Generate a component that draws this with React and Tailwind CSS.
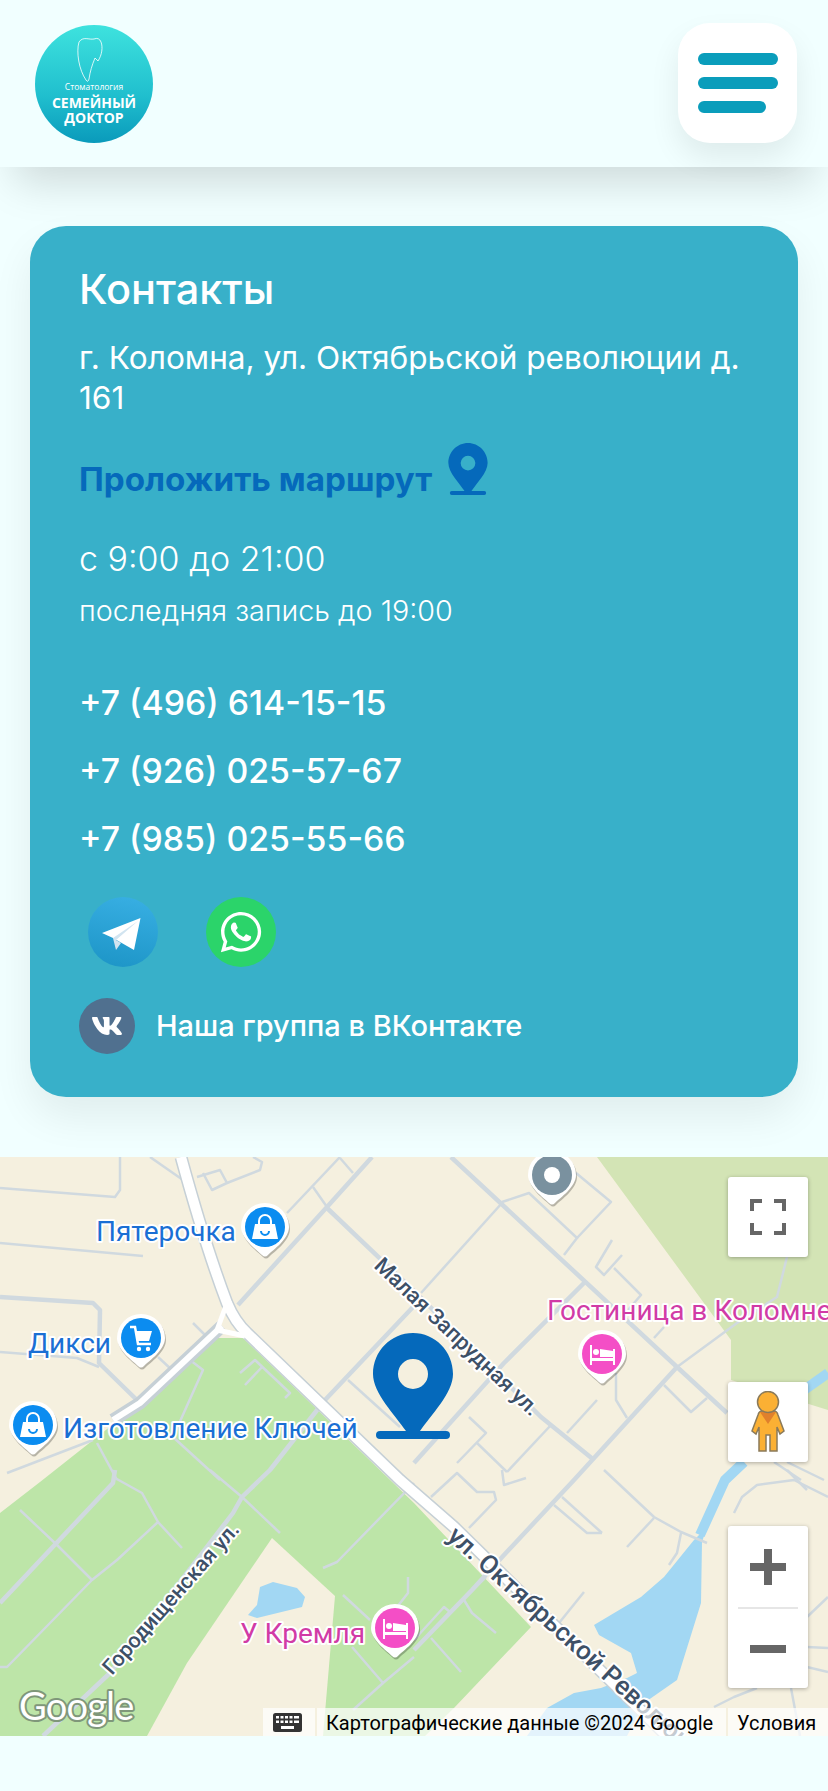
import React from 'react';
import { FaWhatsapp, FaVk } from 'react-icons/fa';

// thin streets, in page coordinates (the map svg starts at y = 1157)
const thinRoads = [
  'M0 1188L115 1197L120 1190V1157', 'M0 1243L143 1256', 'M0 1352L77 1358L99 1367',
  'M150 1157L183 1180', 'M197 1177L220 1170L227 1183L212 1190L203 1173', 'M227 1183L260 1170L262 1162L253 1157',
  'M287 1213L340 1157', 'M313 1187L327 1207', 'M340 1158L353 1173', 'M348 1380L400 1427',
  'M193 1323L205 1335', 'M158 1357L172 1370', 'M190 1360L203 1370L173 1437L220 1480', 'M210 1470L242 1497L280 1533',
  'M240 1373L255 1360L290 1393L285 1398', 'M262 1367L245 1385', 'M97 1443L117 1480', 'M7 1473L93 1440',
  'M20 1510L57 1545L92 1580', 'M0 1667H7L92 1580L117 1560L158 1522L142 1493L115 1478', 'M158 1522L182 1548',
  'M323 1568L337 1562L414 1483', 'M343 1595L370 1620', 'M352 1647L383 1683L414 1657', 'M383 1683L353 1710',
  'M408 1577V1593L397 1607', 'M414 1640L444 1607L450 1612L486 1577', 'M431 1638L461 1672', 'M464 1600L472 1613L496 1633',
  'M677 1367L737 1323L777 1297L787 1257', 'M502 1203L421 1293', 'M502 1202L529 1193L577 1238L564 1255',
  'M576 1173L611 1202L577 1238', 'M612 1240L596 1267L604 1275L622 1255', 'M614 1268L641 1295L628 1310',
  'M654 1338L664 1327', 'M664 1385L691 1412L707 1398', 'M616 1373V1400L627 1418', 'M597 1400L567 1433',
  'M469 1417L486 1433L457 1463', 'M431 1497L457 1473L477 1492H494L496 1500L469 1528', 'M477 1443L507 1472', 'M551 1425L507 1472',
  'M502 1470L504 1485L526 1478', 'M554 1505L587 1533H602', 'M562 1497L602 1533', 'M604 1470L654 1517L681 1532L707 1543',
  'M654 1518L627 1547', 'M584 1592L559 1623', 'M681 1533L677 1553L669 1565', 'M734 1513L742 1497L757 1485L794 1480L828 1497',
  'M787 1470L807 1490', 'M807 1617L828 1597', 'M807 1647L828 1648', 'M807 1667L828 1672', 'M714 1707L734 1697L757 1688',
  'M791 1688L800 1736', 'M774 1462L801 1480', 'M787 1462L824 1480',
];

// wider streets
const wideRoads = [
  'M0 1297L93 1303L100 1310L99 1363L140 1403', 'M238 1305L327 1207L372 1157', 'M327 1208L413 1290L541 1417L594 1460',
  'M413 1307L325 1400L270 1470L242 1497L233 1513L110 1673L43 1736', 'M0 1603L113 1483L115 1470',
  'M451 1157L677 1367L727 1413', 'M677 1367L574 1480L504 1555L472 1590L414 1650', 'M584 1283L504 1363L414 1463',
];

function BagIcon() {
  return (
    <g fill="#fff">
      <path d="M-10 -3H10L13 12H-13Z" />
      <path d="M-6 -3V-6A6 6 0 0 1 6 -6V-3" fill="none" stroke="#fff" strokeWidth="2" />
      <path d="M-4 4A4 4 0 0 0 4 4" fill="none" stroke="#0b8cf0" strokeWidth="2" />
    </g>
  );
}

function CartIcon() {
  return (
    <g fill="#fff">
      <path d="M-11 -11H-6L-3 6H10" fill="none" stroke="#fff" strokeWidth="2.5" />
      <path d="M-5 -7H11L8 3H-3Z" />
      <circle cx="-2" cy="11" r="2.2" />
      <circle cx="7" cy="11" r="2.2" />
    </g>
  );
}

function BedIcon() {
  return (
    <g fill="#fff">
      <rect x="-12" y="-9" width="2" height="20" />
      <rect x="11" y="-5" width="2" height="16" />
      <rect x="-12" y="4" width="25" height="3" />
      <circle cx="-6" cy="-2" r="3" />
      <path d="M-2 -5L11 -3V3H-2Z" />
    </g>
  );
}

function MapPin({ x, y, color, children }) {
  const shape = 'M-24 0A24 24 0 1 1 24 0C24 12 8 23 3 28Q0 31 -3 28C-8 23 -24 12 -24 0Z';
  return (
    <g transform={`translate(${x} ${y})`}>
      <path d={shape} transform="translate(1 2)" fill="#000" opacity="0.25" />
      <path d={shape} fill="#fff" />
      <circle r="20" fill={color} />
      {children}
    </g>
  );
}

function MapLabel({ x, y, color, size = 28, angle, children }) {
  return (
    <text
      x={x}
      y={y}
      transform={angle ? `rotate(${angle} ${x} ${y})` : undefined}
      fill={color}
      fontFamily="Roboto, sans-serif"
      fontSize={size}
      fontWeight={angle ? 500 : 400}
      stroke="#fff"
      strokeWidth="4"
      strokeLinejoin="round"
      paintOrder="stroke"
    >
      {children}
    </text>
  );
}

function RoutePin({ className, color = '#0569bb' }) {
  return (
    <svg viewBox="0 0 80 106" className={className}>
      <path
        fill={color}
        fillRule="evenodd"
        d="M40 0C62 0 80 18 80 41C80 60 58 82 47 98H33C22 82 0 60 0 41C0 18 18 0 40 0ZM40 26A15 15 0 1 0 40 56A15 15 0 1 0 40 26Z"
      />
      <rect x="3" y="98" width="74" height="8" rx="4" fill={color} />
    </svg>
  );
}

function MapDrawing() {
  return (
    <svg viewBox="0 1157 828 579" className="block w-full h-full">
      <rect x="0" y="1157" width="828" height="579" fill="#f5f0df" />
      <path d="M597 1157H828V1410L731 1380V1340Z" fill="#d3e4b5" />
      <path d="M0 1513L40 1482L140 1403L213 1338H243L414 1503L531 1627L454 1708L425 1736H0Z" fill="#bde5a8" />
      <path d="M272 1538L335 1596L323 1736H147L187 1663Z" fill="#f5f0df" />
      <path d="M248 1615L257 1605L260 1587L273 1582L297 1588L305 1597L302 1607L257 1618Z" fill="#a2d7f3" />
      <path d="M707 1527L702 1542L701 1603L677 1680L644 1703L627 1736H527L547 1708L574 1693L601 1688L627 1678L637 1673L631 1653L599 1635L594 1625L641 1597L664 1577L694 1540Z" fill="#a2d7f3" />
      <path d="M700 1535L725 1480L744 1462M790 1400L828 1373" fill="none" stroke="#a2d7f3" strokeWidth="10" />

      <g fill="none" stroke="#d0d9df" strokeLinejoin="round">
        <g strokeWidth="2.5">
          {thinRoads.map((d) => <path key={d} d={d} />)}
        </g>
        <g strokeWidth="4.5">
          {wideRoads.map((d) => <path key={d} d={d} />)}
        </g>
      </g>

      {/* main roads: grey casing, then the white fill */}
      <g fill="none" strokeLinejoin="round">
        <path d="M181 1157Q205 1245 227 1303Q235 1322 247 1333L400 1480L454 1527L667 1736M222 1326L140 1403L113 1420" stroke="#c6d0d6" strokeWidth="13" />
        <path d="M181 1157Q205 1245 227 1303Q235 1322 247 1333L400 1480L454 1527L667 1736" stroke="#fff" strokeWidth="10" />
        <path d="M222 1326L140 1403L113 1420" stroke="#fff" strokeWidth="6" />
        <path d="M227 1303L217 1330L245 1336" stroke="#fff" strokeWidth="5" />
      </g>

      <MapLabel x="373" y="1267" color="#3d5067" size={22} angle={43.5}>Малая Запрудная ул.</MapLabel>
      <MapLabel x="112" y="1676" color="#3d5067" size={21.5} angle={-48.6}>Городищенская ул.</MapLabel>
      <MapLabel x="446" y="1538" color="#3d5067" size={26} angle={42}>ул. Октябрьской Революции</MapLabel>

      <MapLabel x="96" y="1241" color="#1a6fd4">Пятерочка</MapLabel>
      <MapLabel x="28" y="1353" color="#1a6fd4">Дикси</MapLabel>
      <MapLabel x="63" y="1438" color="#1a6fd4">Изготовление Ключей</MapLabel>
      <MapLabel x="547" y="1320" color="#d13ba6">Гостиница в Коломне</MapLabel>
      <MapLabel x="240" y="1643" color="#d13ba6">У Кремля</MapLabel>

      <MapPin x={265} y={1227} color="#0b8cf0"><BagIcon /></MapPin>
      <MapPin x={141} y={1338} color="#0b8cf0"><CartIcon /></MapPin>
      <MapPin x={33} y={1425} color="#0b8cf0"><BagIcon /></MapPin>
      <MapPin x={552} y={1175} color="#7a919f"><circle r="8" fill="#fff" /></MapPin>
      <MapPin x={602} y={1354} color="#f44ec6"><BedIcon /></MapPin>
      <MapPin x={395} y={1628} color="#f44ec6"><BedIcon /></MapPin>

      <text x="19" y="1720" fontFamily="Lato, sans-serif" fontSize="38" letterSpacing="-0.8" fill="#fff" stroke="#7f977a" strokeWidth="4" strokeLinejoin="round" paintOrder="stroke">Google</text>
    </svg>
  );
}

function MapSection() {
  return (
    <section className="relative h-[579px] mt-[60px] overflow-hidden">
      <MapDrawing />
      <RoutePin className="absolute left-[373px] top-[176px] w-[80px] h-[106px]" />

      <button className="absolute left-[728px] top-[20px] w-[80px] h-[80px] bg-white rounded-[3px] shadow-[0_1px_4px_rgba(0,0,0,0.3)] flex items-center justify-center">
        <svg viewBox="0 0 36 36" className="w-[36px] h-[36px]">
          <path d="M2 12V2H12M24 2H34V12M34 24V34H24M12 34H2V24" fill="none" stroke="#666" strokeWidth="4" />
        </svg>
      </button>

      <button className="absolute left-[728px] top-[225px] w-[80px] h-[80px] bg-white rounded-[3px] shadow-[0_1px_4px_rgba(0,0,0,0.3)] flex items-center justify-center">
        <svg viewBox="0 0 36 62" className="w-[36px] h-[62px]">
          <path d="M12 20H24Q27 20 28 24L34 40L30 43L27 36V60H20V44H16V60H9V36L6 43L2 40L8 24Q9 20 12 20Z" fill="#fbb034" stroke="#8a7a5a" strokeWidth="1.5" />
          <path d="M10 21H26L18 33Z" fill="#e0802c" />
          <circle cx="18" cy="11" r="10.5" fill="#fbb034" stroke="#8a7a5a" strokeWidth="1.5" />
        </svg>
      </button>

      <div className="absolute left-[728px] top-[369px] w-[80px] h-[162px] bg-white rounded-[3px] shadow-[0_1px_4px_rgba(0,0,0,0.3)] flex flex-col items-center">
        <div className="h-[81px] w-full flex items-center justify-center">
          <div className="relative w-[36px] h-[36px]">
            <div className="absolute left-0 top-[14px] w-[36px] h-[8px] bg-[#666]"></div>
            <div className="absolute left-[14px] top-0 w-[8px] h-[36px] bg-[#666]"></div>
          </div>
        </div>
        <div className="w-[60px] h-[2px] bg-[#e6e6e6]"></div>
        <div className="flex-1 w-full flex items-center justify-center">
          <div className="w-[36px] h-[8px] bg-[#666]"></div>
        </div>
      </div>

      <div className="absolute right-0 bottom-0 h-[28px] flex gap-[2px] font-['Roboto',sans-serif] text-[20px] leading-[30px] text-black">
        <div className="w-[52px] bg-white/70 flex items-center justify-center pr-[4px]">
          <svg viewBox="0 0 29 19" className="w-[29px] h-[19px]">
            <rect width="29" height="19" rx="2.5" fill="#333" />
            <path d="M3 3H6V5.500H3ZM7.500 3H10.500V5.500H7.500ZM12 3H15V5.500H12ZM16.500 3H19.500V5.500H16.500ZM21 3H26V5.500H21ZM3 7.500H6V10H3ZM7.500 7.500H10.500V10H7.500ZM12 7.500H15V10H12ZM16.500 7.500H19.500V10H16.500ZM21 7.500H26V10H21ZM8 13H21V16H8Z" fill="#fff" />
          </svg>
        </div>
        <div className="w-[409px] bg-white/70 px-[9px] whitespace-nowrap">Картографические данные ©2024 Google</div>
        <div className="w-[100px] bg-white/70 pl-[9px] whitespace-nowrap">Условия</div>
      </div>
    </section>
  );
}

function Logo() {
  return (
    <svg viewBox="0 0 118 118" className="w-[118px] h-[118px]">
      <defs>
        <linearGradient id="logoFill" x1="0" y1="0" x2="0" y2="1">
          <stop offset="0" stopColor="#3ee2de" />
          <stop offset="0.6" stopColor="#20bfce" />
          <stop offset="1" stopColor="#0a9abb" />
        </linearGradient>
      </defs>
      <circle cx="59" cy="59" r="59" fill="url(#logoFill)" />
      <path d="M44 17C41 27 44 45 51 55Q53 58 54 54C55 47 57 40 60 33L63 36C67 30 68 22 66 17Q64 12 59 14C54 15 48 11 44 17Z" fill="none" stroke="#fff" strokeWidth="0.8" />
      <g fill="#fff" textAnchor="middle" fontFamily="'Open Sans', sans-serif">
        <text x="59" y="65" fontSize="8.500">Стоматология</text>
        <text x="59" y="83" fontSize="14" fontWeight="700">СЕМЕЙНЫЙ</text>
        <text x="59" y="98" fontSize="14" fontWeight="700">ДОКТОР</text>
      </g>
    </svg>
  );
}

function TelegramIcon() {
  return (
    <svg viewBox="0 0 70 70" className="w-[70px] h-[70px]">
      <defs>
        <linearGradient id="tgFill" x1="0.6" y1="0" x2="0.4" y2="1">
          <stop offset="0" stopColor="#37aee2" />
          <stop offset="1" stopColor="#1e96c8" />
        </linearGradient>
      </defs>
      <circle cx="35" cy="35" r="35" fill="url(#tgFill)" />
      <path d="M52.500 21L14 36L25 41L46 53Z" fill="#fff" />
      <path d="M25 41L28 53L33 46L28 43L50 24Z" fill="#d2e4f0" />
    </svg>
  );
}

export default function App() {
  return (
    <div className="min-h-[1791px] bg-[#f1ffff] font-['Inter',sans-serif] overflow-hidden">
      <header className="relative z-10 h-[167px] bg-[#f1ffff] flex items-start justify-between pl-[35px] pr-[31px] shadow-[0_30px_40px_-15px_rgba(0,0,0,0.15)]">
        <div className="mt-[25px]">
          <Logo />
        </div>
        <button className="mt-[23px] w-[119px] h-[120px] bg-white rounded-[32px] shadow-[0_15px_30px_rgba(0,0,0,0.08)] flex flex-col gap-[12px] pt-[30px] pl-[20px]">
          <span className="block w-[80px] h-[12px] rounded-full bg-[#0a9dbb]"></span>
          <span className="block w-[80px] h-[12px] rounded-full bg-[#0a9dbb]"></span>
          <span className="block w-[68px] h-[12px] rounded-full bg-[#0a9dbb]"></span>
        </button>
      </header>

      <main className="mx-[30px] mt-[59px] bg-[#38b0c9] rounded-[36px] pl-[49px] pr-[30px] pt-[39px] pb-[43px] text-white shadow-[0_20px_40px_rgba(0,0,0,0.07)]">
        <h1 className="text-[41.5px] leading-[48px] font-medium">Контакты</h1>
        <p className="mt-[25px] text-[31.6px] leading-[40px] font-normal">г. Коломна, ул. Октябрьской революции д. 161</p>

        <a className="mt-[25px] h-[52px] flex items-end gap-[15px] text-[#0569bb]">
          <span className="-mb-[6px] text-[33.2px] leading-[44px] font-bold whitespace-nowrap">Проложить маршрут</span>
          <RoutePin className="w-[42px] h-[52px]" />
        </a>

        <p className="mt-[41px] text-[34px] leading-[46px] font-light">с 9:00 до 21:00</p>
        <p className="mt-[11px] text-[28.7px] leading-[36px] font-light">последняя запись до 19:00</p>

        <div className="mt-[52px] flex flex-col gap-[24px] text-[33.800px] leading-[44px] font-medium">
          <a>+7 (496) 614-15-15</a>
          <a>+7 (926) 025-57-67</a>
          <a>+7 (985) 025-55-66</a>
        </div>

        <div className="mt-[36px] flex gap-[48px] pl-[9px]">
          <TelegramIcon />
          <div className="w-[70px] h-[70px] rounded-full bg-[#2bd46a] flex items-center justify-center">
            <FaWhatsapp className="text-white text-[46px]" />
          </div>
        </div>

        <a className="mt-[31px] flex items-center gap-[21px]">
          <span className="w-[56px] h-[56px] rounded-full bg-[#50708f] flex items-center justify-center">
            <FaVk className="text-white text-[32px]" />
          </span>
          <span className="text-[29px] leading-[36px] font-medium">Наша группа в ВКонтакте</span>
        </a>
      </main>

      <MapSection />
    </div>
  );
}
